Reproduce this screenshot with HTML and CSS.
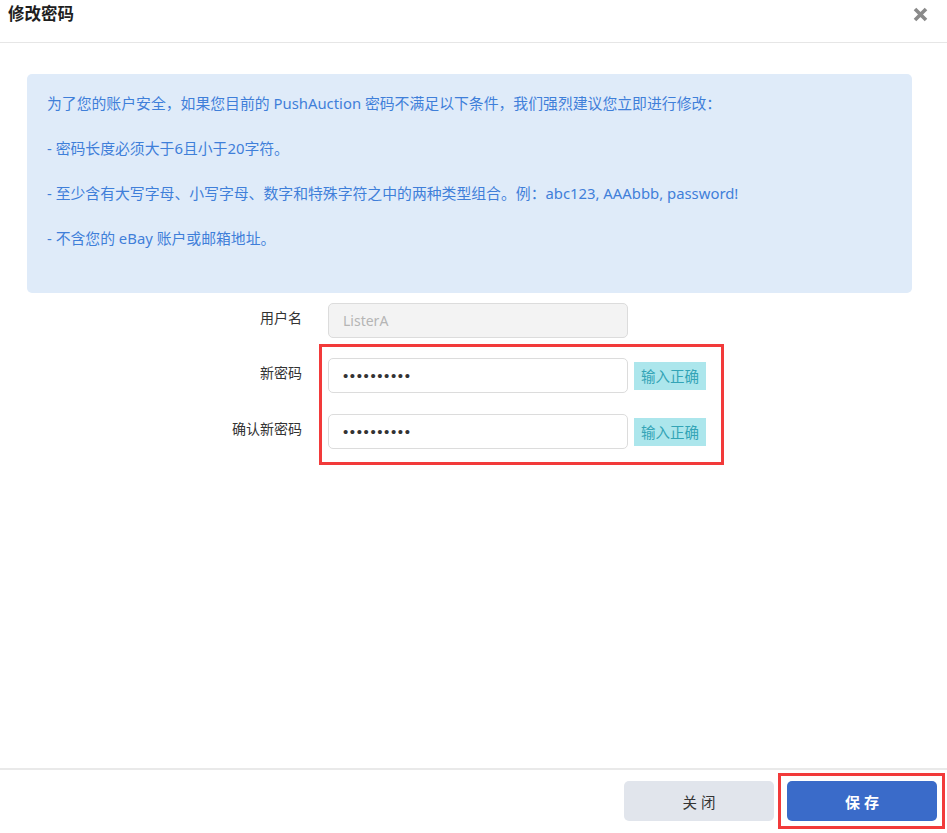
FILE: index.html
```html
<!DOCTYPE html>
<html lang="zh-CN">
<head>
<meta charset="utf-8">
<title>修改密码</title>
<link rel="stylesheet" href="styles.css">
</head>
<body>
<div class="modal">
  <div class="modal-header">
    <h1 class="modal-title">修改密码</h1>
    <button class="close-btn" aria-label="关闭">
      <svg width="15" height="15" viewBox="0 0 15 15"><path d="M2 2L13 13M13 2L2 13" stroke="#8a8a8a" stroke-width="3.6" stroke-linecap="butt"/></svg>
    </button>
  </div>
  <div class="modal-body">
    <div class="notice">
      <p>为了您的账户安全，如果您目前的 PushAuction 密码不满足以下条件，我们强烈建议您立即进行修改：</p>
      <p>- 密码长度必须大于6且小于20字符。</p>
      <p>- 至少含有大写字母、小写字母、数字和特殊字符之中的两种类型组合。例：abc123, AAAbbb, password!</p>
      <p>- 不含您的 eBay 账户或邮箱地址。</p>
    </div>
    <div class="form">
      <div class="row">
        <label class="label">用户名</label>
        <input class="field field-disabled" type="text" value="ListerA" readonly>
      </div>
      <div class="group-marked">
        <div class="row">
          <label class="label">新密码</label>
          <input class="field field-pwd" type="password" value="abcdefghij" readonly>
          <span class="badge">输入正确</span>
        </div>
        <div class="row">
          <label class="label">确认新密码</label>
          <input class="field field-pwd" type="password" value="abcdefghij" readonly>
          <span class="badge">输入正确</span>
        </div>
      </div>
    </div>
  </div>
  <div class="modal-footer">
    <button class="btn btn-default">关 闭</button>
    <button class="btn btn-primary marked">保 存</button>
  </div>
</div>
</body>
</html>
```
FILE: styles.css
```css
*, *::before, *::after { box-sizing: border-box; }
html, body { margin: 0; padding: 0; background: #fff; }
body {
  font-family: "Noto Sans", "Noto Sans CJK SC", sans-serif;
  font-size: 14px;
  color: #333;
}
.modal {
  width: 947px;
  height: 833px;
  display: flex;
  flex-direction: column;
}
.modal-header {
  height: 43px;
  border-bottom: 1px solid #e6e6e6;
  display: flex;
  justify-content: space-between;
  align-items: flex-start;
  padding: 3px 19px 0 8px;
}
.modal-title {
  margin: 0;
  font-size: 16.5px;
  font-weight: bold;
  line-height: 22px;
  color: #1e1e1e;
}
.close-btn {
  border: 0;
  background: none;
  padding: 0;
  margin-top: 4px;
  width: 15px;
  height: 15px;
  cursor: pointer;
  display: block;
}
.close-btn svg { display: block; }
.modal-body {
  flex: 1;
  padding: 31px 35px 0 27px;
}
.notice {
  background: #dfebf9;
  border-radius: 5px;
  padding: 7px 20px 32px 20px;
  color: #3f7fd9;
  font-size: 14.85px;
}
.notice p {
  margin: 0;
  line-height: 45px;
  white-space: nowrap;
}
.form {
  padding-top: 10px;
}
.row {
  display: flex;
  align-items: center;
  height: 35px;
  margin-bottom: 20px;
}
.group-marked {
  position: relative;
}
.group-marked .row:first-child { margin-bottom: 0; }
.group-marked .row + .row { margin-top: 21px; }
.group-marked .row:last-child { margin-bottom: 0; }
.group-marked::after {
  content: "";
  position: absolute;
  left: 292px;
  top: -14px;
  width: 405px;
  height: 121px;
  border: 3px solid #f23a3a;
  pointer-events: none;
}
.label {
  width: 275px;
  text-align: right;
  margin-right: 26px;
  color: #333;
  font-size: 14px;
  align-self: flex-start;
  line-height: 20px;
  padding-top: 5px;
}
.field {
  width: 300px;
  height: 35px;
  border: 1px solid #dcdcdc;
  border-radius: 5px;
  padding: 0 14px;
  font-family: "Noto Sans", "Noto Sans CJK SC", sans-serif;
  font-size: 14px;
  outline: none;
  background: #fff;
}
.field-disabled {
  background: #f3f3f3;
  color: #b5b5b5;
}
.field-pwd {
  font-family: "Liberation Sans", sans-serif;
  color: #333;
  font-size: 15px;
  letter-spacing: 1.6px;
}
.badge {
  margin-left: 6px;
  width: 72px;
  height: 28px;
  background: #ace6ec;
  color: #33a4b6;
  font-size: 14.5px;
  line-height: 28px;
  text-align: center;
}
.modal-footer {
  height: 65px;
  border-top: 2px solid #e9e9e9;
  display: flex;
  justify-content: flex-end;
  align-items: flex-start;
  padding: 11px 10px 0 0;
  gap: 13px;
}
.btn {
  width: 150px;
  height: 40px;
  border: 0;
  border-radius: 5px;
  font-family: "Noto Sans", "Noto Sans CJK SC", sans-serif;
  font-size: 14.5px;
  cursor: pointer;
}
.btn-default {
  background: #e1e5ec;
  color: #333;
}
.btn-primary {
  background: #3a6bc9;
  color: #fff;
  font-size: 15px;
  font-weight: bold;
}
.marked {
  position: relative;
}
.marked::after {
  content: "";
  position: absolute;
  left: -9px;
  top: -8px;
  right: -8px;
  bottom: -8px;
  border: 3px solid #f23a3a;
  pointer-events: none;
}
```
